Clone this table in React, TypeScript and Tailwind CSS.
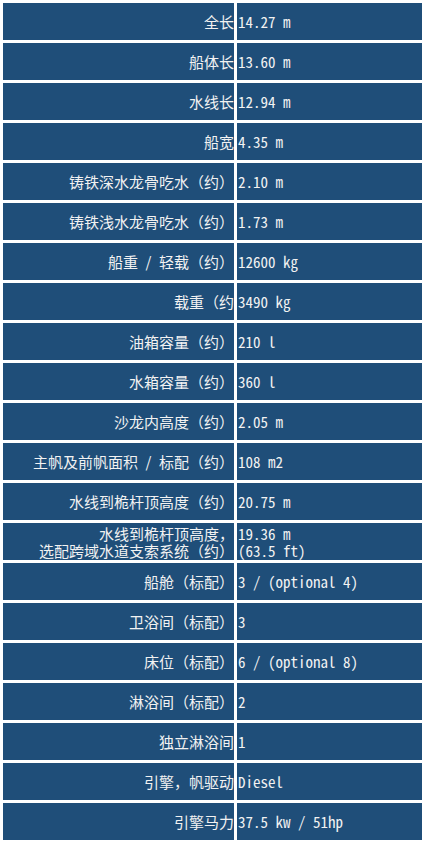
// 规格表：左列为项目名（右对齐），右列为数值，深蓝单元格之间留白线。
const specs: [string, string][] = [
  ['全长', '14.27 m'],
  ['船体长', '13.60 m'],
  ['水线长', '12.94 m'],
  ['船宽', '4.35 m'],
  ['铸铁深水龙骨吃水（约）', '2.10 m'],
  ['铸铁浅水龙骨吃水（约）', '1.73 m'],
  ['船重\u2002/\u2002轻载（约）', '12600 kg'],
  ['载重（约', '3490 kg'],
  ['油箱容量（约）', '210 l'],
  ['水箱容量（约）', '360 l'],
  ['沙龙内高度（约）', '2.05 m'],
  ['主帆及前帆面积\u2002/\u2002标配（约）', '108 m2'],
  ['水线到桅杆顶高度（约）', '20.75 m'],
  ['水线到桅杆顶高度，\n选配跨域水道支索系统（约）', '19.36 m\n(63.5 ft)'],
  ['船舱（标配）', '3 / (optional 4)'],
  ['卫浴间（标配）', '3'],
  ['床位（标配）', '6 / (optional 8)'],
  ['淋浴间（标配）', '2'],
  ['独立淋浴间', '1'],
  ['引擎，帆驱动', 'Diesel'],
  ['引擎马力', '37.5 kw / 51hp'],
];

export default function App() {
  return (
    <div className="min-h-[849px] w-[426px] bg-white">
      <div className="grid grid-cols-[231px_185px] gap-[3px] p-[3px] text-[15px] leading-[17px] text-[#f2f2f2]">
        {specs.map(([label, value]) => (
          <div key={label} className="contents">
            <div className="flex h-[37px] items-center justify-end whitespace-pre bg-[#1f4e79] text-right font-['Noto_Sans_CJK_SC',sans-serif]">
              {label}
            </div>
            <div className="flex h-[37px] items-center whitespace-pre bg-[#1f4e79] pl-[1px] font-['Noto_Sans_Mono_CJK_SC','Liberation_Mono',monospace]">
              {value}
            </div>
          </div>
        ))}
      </div>
    </div>
  );
}
